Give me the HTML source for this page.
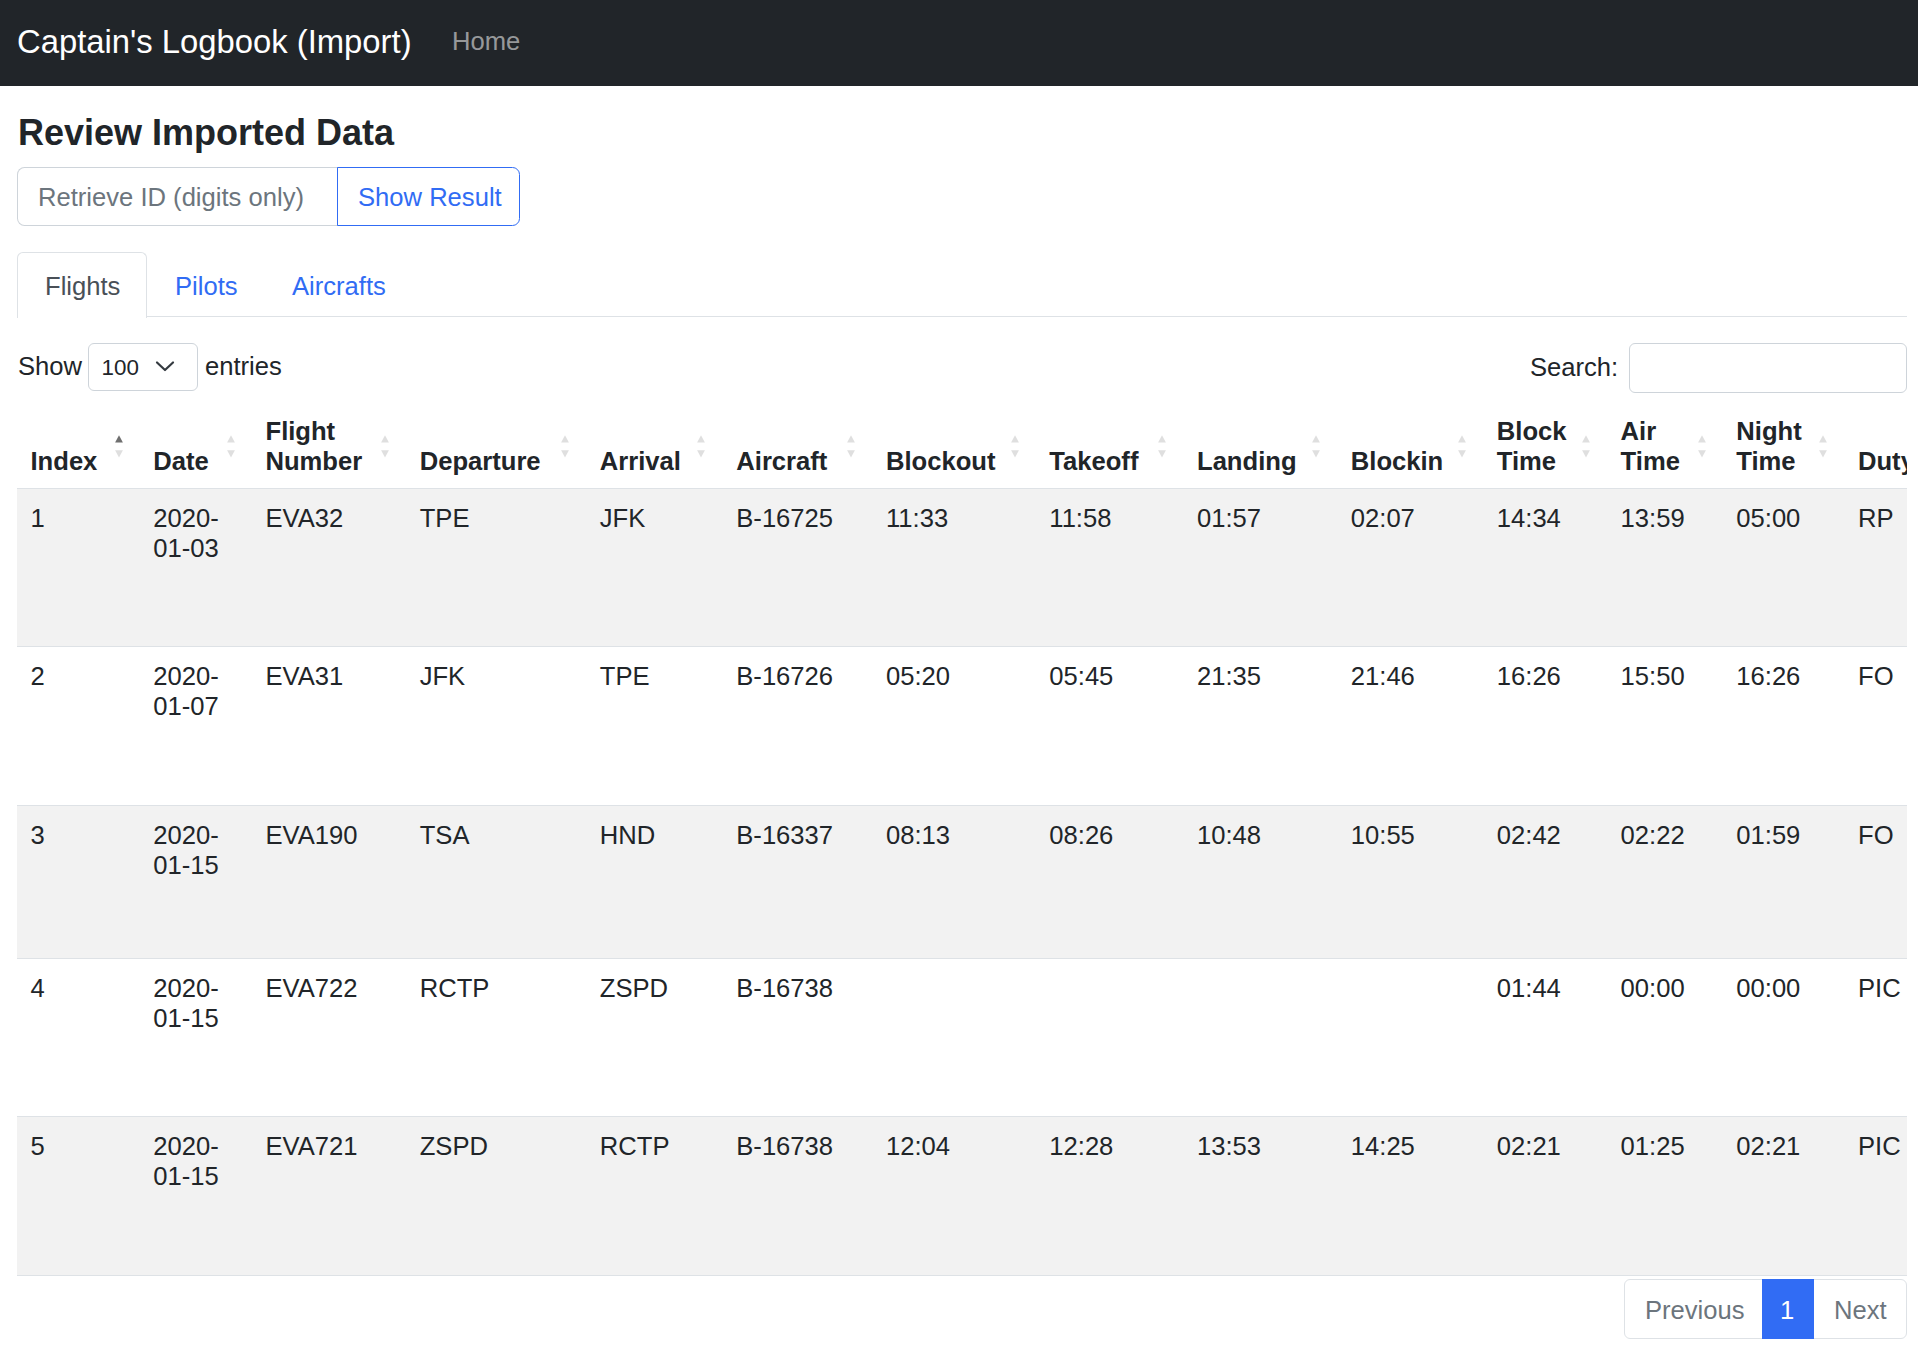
<!DOCTYPE html>
<html><head><meta charset="utf-8"><title>Captain's Logbook (Import)</title>
<style>
html,body{margin:0;padding:0;background:#fff;}
body{width:1918px;height:1354px;position:relative;overflow:hidden;font-family:"Liberation Sans",sans-serif;color:#212529;font-size:25.6px;}
.t{position:absolute;white-space:nowrap;line-height:1;}
.b{font-weight:700;}
#nav{position:absolute;left:0;top:0;width:1918px;height:86px;background:#212529;}
.box{position:absolute;box-sizing:border-box;}
</style></head>
<body>
<div id="nav">
  <span class="t" style="left:17px;top:26px;font-size:32.8px;color:#fff;">Captain's Logbook (Import)</span>
  <span class="t" style="left:452px;top:29px;color:rgba(255,255,255,.55);">Home</span>
</div>

<span class="t b" style="left:18px;top:115px;font-size:36px;">Review Imported Data</span>

<!-- input group -->
<div class="box" style="left:17px;top:167px;width:321px;height:59px;border:1px solid #ced4da;border-right:none;border-radius:7.5px 0 0 7.5px;"></div>
<span class="t" style="left:38px;top:184.5px;color:#6c757d;">Retrieve ID (digits only)</span>
<div class="box" style="left:337px;top:167px;width:183px;height:59px;border:1px solid #316cf4;border-radius:0 7.5px 7.5px 0;"></div>
<span class="t" style="left:358px;top:184.5px;color:#316cf4;">Show Result</span>

<!-- tabs -->
<div class="box" style="left:17px;top:316px;width:1890px;height:1px;background:#dee2e6;"></div>
<div class="box" style="left:17px;top:252px;width:130px;height:66px;border:1px solid #dee2e6;border-bottom:none;border-radius:6px 6px 0 0;background:#fff;"></div>
<span class="t" style="left:45px;top:273.5px;color:#495057;">Flights</span>
<span class="t" style="left:175px;top:273.5px;color:#316cf4;">Pilots</span>
<span class="t" style="left:292px;top:273.5px;color:#316cf4;">Aircrafts</span>

<!-- show entries -->
<span class="t" style="left:18px;top:353.6px;">Show</span>
<div class="box" style="left:88px;top:343px;width:110px;height:48px;border:1px solid #ced4da;border-radius:6px;"></div>
<span class="t" style="left:101.5px;top:356.6px;font-size:22.4px;">100</span>
<svg style="position:absolute;left:155px;top:360px;" width="20" height="13" viewBox="0 0 20 13"><path d="M2 2.5 L10 10 L18 2.5" fill="none" stroke="#343a40" stroke-width="2.2" stroke-linecap="round" stroke-linejoin="round"/></svg>
<span class="t" style="left:205px;top:353.6px;">entries</span>

<span class="t" style="left:1530px;top:355px;">Search:</span>
<div class="box" style="left:1629px;top:343px;width:278px;height:50px;border:1px solid #ced4da;border-radius:6px;"></div>

<!-- table header -->
<div style="position:absolute;left:17px;top:400px;width:1890px;height:880px;overflow:hidden;">
<span class="t b" style="left:13.5px;top:48.83px;">Index</span>
<svg style="position:absolute;left:97.7px;top:35.4px" width="8" height="23" viewBox="0 0 8 23"><path d="M4 0.2 L7.9 7.5 L0.1 7.5 Z" fill="#6f6f6f"/><path d="M0.1 15.3 L7.9 15.3 L4 22.5 Z" fill="#dfdfdf"/></svg>
<span class="t b" style="left:136.3px;top:48.83px;">Date</span>
<svg style="position:absolute;left:209.8px;top:35.4px" width="8" height="23" viewBox="0 0 8 23"><path d="M4 0.2 L7.9 7.5 L0.1 7.5 Z" fill="#dfdfdf"/><path d="M0.1 15.3 L7.9 15.3 L4 22.5 Z" fill="#dfdfdf"/></svg>
<span class="t b" style="left:248.5px;top:19.13px;">Flight</span>
<span class="t b" style="left:248.5px;top:48.83px;">Number</span>
<svg style="position:absolute;left:364.1px;top:35.4px" width="8" height="23" viewBox="0 0 8 23"><path d="M4 0.2 L7.9 7.5 L0.1 7.5 Z" fill="#dfdfdf"/><path d="M0.1 15.3 L7.9 15.3 L4 22.5 Z" fill="#dfdfdf"/></svg>
<span class="t b" style="left:402.7px;top:48.83px;">Departure</span>
<svg style="position:absolute;left:543.7px;top:35.4px" width="8" height="23" viewBox="0 0 8 23"><path d="M4 0.2 L7.9 7.5 L0.1 7.5 Z" fill="#dfdfdf"/><path d="M0.1 15.3 L7.9 15.3 L4 22.5 Z" fill="#dfdfdf"/></svg>
<span class="t b" style="left:582.8px;top:48.83px;">Arrival</span>
<svg style="position:absolute;left:680.3px;top:35.4px" width="8" height="23" viewBox="0 0 8 23"><path d="M4 0.2 L7.9 7.5 L0.1 7.5 Z" fill="#dfdfdf"/><path d="M0.1 15.3 L7.9 15.3 L4 22.5 Z" fill="#dfdfdf"/></svg>
<span class="t b" style="left:719.3px;top:48.83px;">Aircraft</span>
<svg style="position:absolute;left:830.1px;top:35.4px" width="8" height="23" viewBox="0 0 8 23"><path d="M4 0.2 L7.9 7.5 L0.1 7.5 Z" fill="#dfdfdf"/><path d="M0.1 15.3 L7.9 15.3 L4 22.5 Z" fill="#dfdfdf"/></svg>
<span class="t b" style="left:869.0px;top:48.83px;">Blockout</span>
<svg style="position:absolute;left:993.9px;top:35.4px" width="8" height="23" viewBox="0 0 8 23"><path d="M4 0.2 L7.9 7.5 L0.1 7.5 Z" fill="#dfdfdf"/><path d="M0.1 15.3 L7.9 15.3 L4 22.5 Z" fill="#dfdfdf"/></svg>
<span class="t b" style="left:1032.3px;top:48.83px;">Takeoff</span>
<svg style="position:absolute;left:1141.2px;top:35.4px" width="8" height="23" viewBox="0 0 8 23"><path d="M4 0.2 L7.9 7.5 L0.1 7.5 Z" fill="#dfdfdf"/><path d="M0.1 15.3 L7.9 15.3 L4 22.5 Z" fill="#dfdfdf"/></svg>
<span class="t b" style="left:1180.0px;top:48.83px;">Landing</span>
<svg style="position:absolute;left:1295.2px;top:35.4px" width="8" height="23" viewBox="0 0 8 23"><path d="M4 0.2 L7.9 7.5 L0.1 7.5 Z" fill="#dfdfdf"/><path d="M0.1 15.3 L7.9 15.3 L4 22.5 Z" fill="#dfdfdf"/></svg>
<span class="t b" style="left:1333.8px;top:48.83px;">Blockin</span>
<svg style="position:absolute;left:1440.8px;top:35.4px" width="8" height="23" viewBox="0 0 8 23"><path d="M4 0.2 L7.9 7.5 L0.1 7.5 Z" fill="#dfdfdf"/><path d="M0.1 15.3 L7.9 15.3 L4 22.5 Z" fill="#dfdfdf"/></svg>
<span class="t b" style="left:1479.8px;top:19.13px;">Block</span>
<span class="t b" style="left:1479.8px;top:48.83px;">Time</span>
<svg style="position:absolute;left:1564.6px;top:35.4px" width="8" height="23" viewBox="0 0 8 23"><path d="M4 0.2 L7.9 7.5 L0.1 7.5 Z" fill="#dfdfdf"/><path d="M0.1 15.3 L7.9 15.3 L4 22.5 Z" fill="#dfdfdf"/></svg>
<span class="t b" style="left:1603.6px;top:19.13px;">Air</span>
<span class="t b" style="left:1603.6px;top:48.83px;">Time</span>
<svg style="position:absolute;left:1680.5px;top:35.4px" width="8" height="23" viewBox="0 0 8 23"><path d="M4 0.2 L7.9 7.5 L0.1 7.5 Z" fill="#dfdfdf"/><path d="M0.1 15.3 L7.9 15.3 L4 22.5 Z" fill="#dfdfdf"/></svg>
<span class="t b" style="left:1719.3px;top:19.13px;">Night</span>
<span class="t b" style="left:1719.3px;top:48.83px;">Time</span>
<svg style="position:absolute;left:1802.2px;top:35.4px" width="8" height="23" viewBox="0 0 8 23"><path d="M4 0.2 L7.9 7.5 L0.1 7.5 Z" fill="#dfdfdf"/><path d="M0.1 15.3 L7.9 15.3 L4 22.5 Z" fill="#dfdfdf"/></svg>
<span class="t b" style="left:1841.0px;top:48.83px;">Duty</span>
<div style="position:absolute;left:0;top:88px;width:1890px;height:1px;background:#dee2e6"></div>
<div style="position:absolute;left:0;top:89.0px;width:1890px;height:157.0px;background:#f2f2f2"></div>
<div style="position:absolute;left:0;top:246.0px;width:1890px;height:1px;background:#dee2e6"></div>
<span class="t " style="left:13.5px;top:105.53px;">1</span>
<span class="t " style="left:136.3px;top:105.53px;">2020-</span>
<span class="t " style="left:136.3px;top:135.53px;">01-03</span>
<span class="t " style="left:248.5px;top:105.53px;">EVA32</span>
<span class="t " style="left:402.7px;top:105.53px;">TPE</span>
<span class="t " style="left:582.8px;top:105.53px;">JFK</span>
<span class="t " style="left:719.3px;top:105.53px;">B-16725</span>
<span class="t " style="left:869.0px;top:105.53px;">11:33</span>
<span class="t " style="left:1032.3px;top:105.53px;">11:58</span>
<span class="t " style="left:1180.0px;top:105.53px;">01:57</span>
<span class="t " style="left:1333.8px;top:105.53px;">02:07</span>
<span class="t " style="left:1479.8px;top:105.53px;">14:34</span>
<span class="t " style="left:1603.6px;top:105.53px;">13:59</span>
<span class="t " style="left:1719.3px;top:105.53px;">05:00</span>
<span class="t " style="left:1841.0px;top:105.53px;">RP</span>
<div style="position:absolute;left:0;top:247.0px;width:1890px;height:158.0px;background:#fff"></div>
<div style="position:absolute;left:0;top:405.0px;width:1890px;height:1px;background:#dee2e6"></div>
<span class="t " style="left:13.5px;top:263.53px;">2</span>
<span class="t " style="left:136.3px;top:263.53px;">2020-</span>
<span class="t " style="left:136.3px;top:293.53px;">01-07</span>
<span class="t " style="left:248.5px;top:263.53px;">EVA31</span>
<span class="t " style="left:402.7px;top:263.53px;">JFK</span>
<span class="t " style="left:582.8px;top:263.53px;">TPE</span>
<span class="t " style="left:719.3px;top:263.53px;">B-16726</span>
<span class="t " style="left:869.0px;top:263.53px;">05:20</span>
<span class="t " style="left:1032.3px;top:263.53px;">05:45</span>
<span class="t " style="left:1180.0px;top:263.53px;">21:35</span>
<span class="t " style="left:1333.8px;top:263.53px;">21:46</span>
<span class="t " style="left:1479.8px;top:263.53px;">16:26</span>
<span class="t " style="left:1603.6px;top:263.53px;">15:50</span>
<span class="t " style="left:1719.3px;top:263.53px;">16:26</span>
<span class="t " style="left:1841.0px;top:263.53px;">FO</span>
<div style="position:absolute;left:0;top:406.0px;width:1890px;height:152.0px;background:#f2f2f2"></div>
<div style="position:absolute;left:0;top:558.0px;width:1890px;height:1px;background:#dee2e6"></div>
<span class="t " style="left:13.5px;top:422.53px;">3</span>
<span class="t " style="left:136.3px;top:422.53px;">2020-</span>
<span class="t " style="left:136.3px;top:452.53px;">01-15</span>
<span class="t " style="left:248.5px;top:422.53px;">EVA190</span>
<span class="t " style="left:402.7px;top:422.53px;">TSA</span>
<span class="t " style="left:582.8px;top:422.53px;">HND</span>
<span class="t " style="left:719.3px;top:422.53px;">B-16337</span>
<span class="t " style="left:869.0px;top:422.53px;">08:13</span>
<span class="t " style="left:1032.3px;top:422.53px;">08:26</span>
<span class="t " style="left:1180.0px;top:422.53px;">10:48</span>
<span class="t " style="left:1333.8px;top:422.53px;">10:55</span>
<span class="t " style="left:1479.8px;top:422.53px;">02:42</span>
<span class="t " style="left:1603.6px;top:422.53px;">02:22</span>
<span class="t " style="left:1719.3px;top:422.53px;">01:59</span>
<span class="t " style="left:1841.0px;top:422.53px;">FO</span>
<div style="position:absolute;left:0;top:559.0px;width:1890px;height:157.0px;background:#fff"></div>
<div style="position:absolute;left:0;top:716.0px;width:1890px;height:1px;background:#dee2e6"></div>
<span class="t " style="left:13.5px;top:575.53px;">4</span>
<span class="t " style="left:136.3px;top:575.53px;">2020-</span>
<span class="t " style="left:136.3px;top:605.53px;">01-15</span>
<span class="t " style="left:248.5px;top:575.53px;">EVA722</span>
<span class="t " style="left:402.7px;top:575.53px;">RCTP</span>
<span class="t " style="left:582.8px;top:575.53px;">ZSPD</span>
<span class="t " style="left:719.3px;top:575.53px;">B-16738</span>
<span class="t " style="left:1479.8px;top:575.53px;">01:44</span>
<span class="t " style="left:1603.6px;top:575.53px;">00:00</span>
<span class="t " style="left:1719.3px;top:575.53px;">00:00</span>
<span class="t " style="left:1841.0px;top:575.53px;">PIC</span>
<div style="position:absolute;left:0;top:717.0px;width:1890px;height:158.0px;background:#f2f2f2"></div>
<div style="position:absolute;left:0;top:875.0px;width:1890px;height:1px;background:#dee2e6"></div>
<span class="t " style="left:13.5px;top:733.53px;">5</span>
<span class="t " style="left:136.3px;top:733.53px;">2020-</span>
<span class="t " style="left:136.3px;top:763.53px;">01-15</span>
<span class="t " style="left:248.5px;top:733.53px;">EVA721</span>
<span class="t " style="left:402.7px;top:733.53px;">ZSPD</span>
<span class="t " style="left:582.8px;top:733.53px;">RCTP</span>
<span class="t " style="left:719.3px;top:733.53px;">B-16738</span>
<span class="t " style="left:869.0px;top:733.53px;">12:04</span>
<span class="t " style="left:1032.3px;top:733.53px;">12:28</span>
<span class="t " style="left:1180.0px;top:733.53px;">13:53</span>
<span class="t " style="left:1333.8px;top:733.53px;">14:25</span>
<span class="t " style="left:1479.8px;top:733.53px;">02:21</span>
<span class="t " style="left:1603.6px;top:733.53px;">01:25</span>
<span class="t " style="left:1719.3px;top:733.53px;">02:21</span>
<span class="t " style="left:1841.0px;top:733.53px;">PIC</span>
</div>
<!-- pagination -->
<div class="box" style="left:1624px;top:1279px;width:283px;height:60px;border:1px solid #dee2e6;border-radius:6px;"></div>
<div class="box" style="left:1762px;top:1279px;width:52px;height:60px;background:#316cf4;"></div>
<span class="t" style="left:1645px;top:1298.4px;color:#6c757d;">Previous</span>
<span class="t" style="left:1780px;top:1298.4px;color:#fff;">1</span>
<span class="t" style="left:1834px;top:1298.4px;color:#6c757d;">Next</span>
</body></html>
